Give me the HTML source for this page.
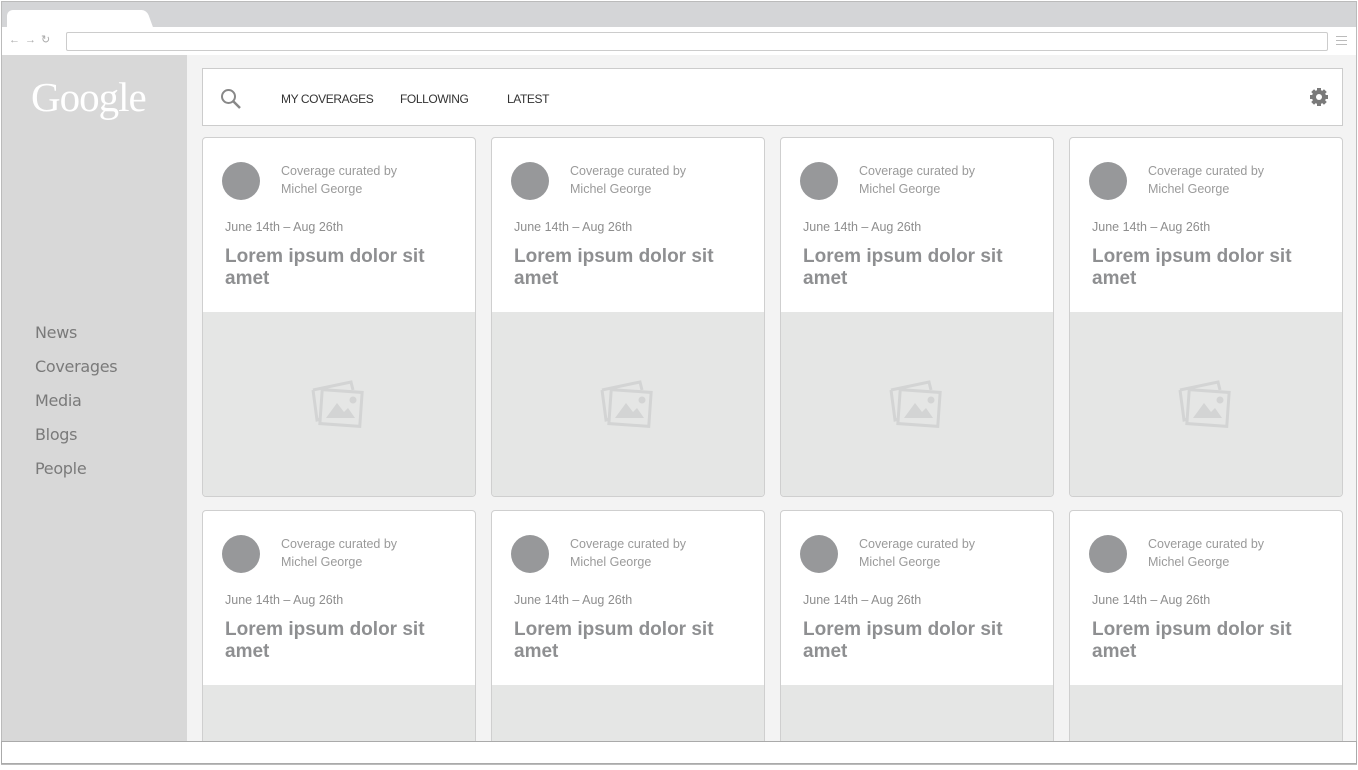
<!DOCTYPE html>
<html><head><style>
*{margin:0;padding:0;box-sizing:border-box}
body{width:1358px;height:770px;background:#fff;position:relative;overflow:hidden;font-family:"Liberation Sans",sans-serif}
.a{position:absolute}
.card{position:absolute;width:274px;background:#fff;border:1px solid #cfcfcf;border-radius:4px;overflow:hidden}
.card .img{position:absolute;left:0;right:0;top:174px;bottom:0;background:#e5e6e5}
.av{position:absolute;left:19px;top:24px;width:38px;height:38px;border-radius:50%;background:#97989a}
.cb{position:absolute;left:78px;top:24px;font-size:12.5px;line-height:18px;color:#9a9a9a}
.dt{position:absolute;left:22px;top:82px;font-size:12.5px;color:#8e8e8e}
.tt{position:absolute;left:22px;top:108px;font-size:19px;font-weight:bold;line-height:22px;color:#8e8f91}
.nav{position:absolute;left:35px;color:#7a7a7a;font-family:"DejaVu Sans",sans-serif;font-size:16px;letter-spacing:-0.3px}
.hn{position:absolute;top:92px;font-size:12px;color:#333;letter-spacing:-0.4px}
</style></head><body>
<div class="a" style="left:1px;top:1px;width:1356px;height:764px;border:1px solid #bbb;background:#f3f3f3"></div>
<div class="a" style="left:2px;top:2px;width:1354px;height:25px;background:#d4d5d7"></div>
<div class="a" style="left:7px;top:10px;width:138px;height:18px;background:#fff;border-radius:6px 6px 0 0"></div>
<div class="a" style="left:138px;top:10px;width:12px;height:18px;background:#fff;transform:skewX(20deg);border-radius:0 5px 0 0"></div>
<div class="a" style="left:2px;top:27px;width:1354px;height:28px;background:#fff"></div>
<div class="a" style="left:66px;top:32px;width:1262px;height:19px;border:1px solid #ccc;border-radius:2px;background:#fff"></div>
<div class="a" style="left:9px;top:33px;font-size:11px;color:#aaa;letter-spacing:5px">←→↻</div>
<div class="a" style="left:1336px;top:36px;width:11px;height:9px;border-top:1px solid #bbb;border-bottom:1px solid #bbb"></div>
<div class="a" style="left:1336px;top:40px;width:11px;height:1px;background:#bbb"></div>
<div class="a" style="left:2px;top:55px;width:185px;height:686px;background:#d8d8d8"></div>
<div class="a" style="left:31px;top:73px;font-family:'Liberation Serif',serif;font-size:41px;color:#fff;letter-spacing:-1px">Google</div>
<div class="nav" style="top:323px">News</div>
<div class="nav" style="top:357px">Coverages</div>
<div class="nav" style="top:391px">Media</div>
<div class="nav" style="top:425px">Blogs</div>
<div class="nav" style="top:459px">People</div>
<div class="a" style="left:202px;top:68px;width:1141px;height:58px;background:#fff;border:1px solid #ccc"></div>
<svg class="a" style="left:220px;top:88px" width="22" height="22"><circle cx="8.5" cy="8.5" r="6.5" fill="none" stroke="#888" stroke-width="2"/><line x1="13" y1="13" x2="20" y2="20" stroke="#888" stroke-width="2.5"/></svg>
<div class="hn" style="left:281px">MY COVERAGES</div>
<div class="hn" style="left:400px">FOLLOWING</div>
<div class="hn" style="left:507px">LATEST</div>
<svg class="a" style="left:1309px;top:87px" width="20" height="20" viewBox="0 0 20 20"><g fill="#7a7a7a"><circle cx="10" cy="10" r="7"/><rect x="8" y="1" width="4" height="18"/><rect x="1" y="8" width="18" height="4"/><rect x="8" y="1" width="4" height="18" transform="rotate(45 10 10)"/><rect x="8" y="1" width="4" height="18" transform="rotate(-45 10 10)"/></g><circle cx="10" cy="10" r="3" fill="#fff"/></svg>
<div id="c"></div>
<div class="a" style="left:1px;top:741px;width:1356px;height:23px;background:#fff;border:1px solid #aaa"></div>
<script>
var xs=[202,491,780,1069],ys=[137,510],h='';
ys.forEach(function(y,i){xs.forEach(function(x){
h+='<div class="card" style="left:'+x+'px;top:'+y+'px;height:'+(i?240:360)+'px"><div class="img">'+(i?'':'<svg style="position:absolute;left:106px;top:64px" width="58" height="56" viewBox="0 0 58 56"><g fill="none" stroke="#d3d4d4" stroke-width="3"><path d="M4 14 L42 6 L44 14"/><path d="M4 14 L8 44 L12 43"/><rect x="12" y="15" width="40" height="34" transform="rotate(4 32 32)"/></g><path d="M17 42 L28 27 L35 36 L39 32 L46 42 Z" fill="#d3d4d4"/><circle cx="44" cy="24" r="3.5" fill="#d3d4d4"/></svg>')+'</div><div class="av"></div><div class="cb">Coverage curated by<br>Michel George</div><div class="dt">June 14th – Aug 26th</div><div class="tt">Lorem ipsum dolor sit<br>amet</div></div>';
});});
document.getElementById('c').innerHTML=h;
</script>
</body></html>
